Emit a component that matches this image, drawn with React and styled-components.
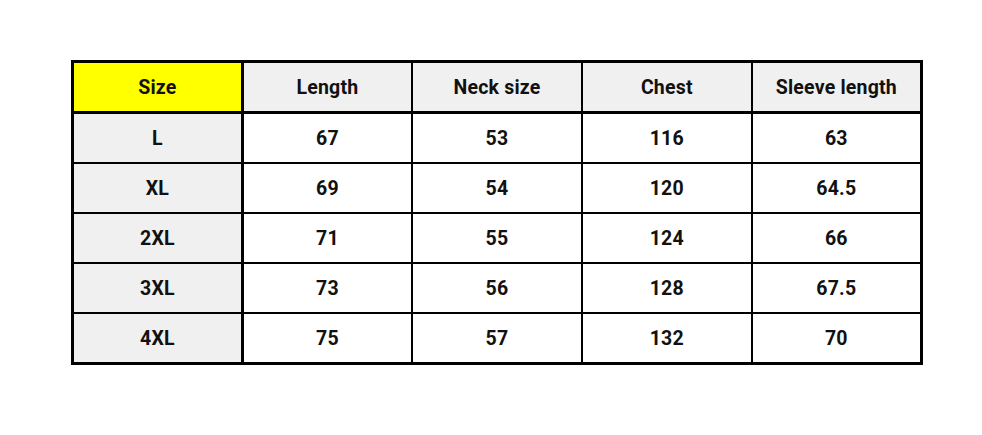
import React from 'react';
import styled, { createGlobalStyle } from 'styled-components';

const GlobalStyle = createGlobalStyle`
    body{
        margin: 0;
        background: #ffffff;
        font-family: Roboto, "Liberation Sans", sans-serif;
    }
`

const Page = styled.div`
    width: 982px;
    height: 435px;
    padding-top: 60px;
    padding-left: 71px;
    box-sizing: border-box;
`

const Table = styled.table`
    border-collapse: collapse;
    table-layout: fixed;
    width: 852px;
    border: 3px solid #000;
`

const Cell = styled.td`
    height: 48px;
    padding: 0;
    text-align: center;
    vertical-align: middle;
    font-size: 19.5px;
    letter-spacing: 0.2px;
    font-weight: 700;
    color: #111;
    border: 2px solid #000;
    background: ${(p) => (p.$yellow ? '#ffff00' : p.$grey ? '#f0f0f0' : '#ffffff')};
    border-right-width: ${(p) => (p.$first ? '3px' : '2px')};
    border-bottom-width: ${(p) => (p.$head ? '3px' : '2px')};
`

const headers = ['Size', 'Length', 'Neck size', 'Chest', 'Sleeve length'];
const rows = [
    ['L', '67', '53', '116', '63'],
    ['XL', '69', '54', '120', '64.5'],
    ['2XL', '71', '55', '124', '66'],
    ['3XL', '73', '56', '128', '67.5'],
    ['4XL', '75', '57', '132', '70'],
];

const App = () => {
    return (
        <Page>
            <GlobalStyle />
            <Table>
                <tbody>
                    <tr>
                        {headers.map((h, i) =>
                            <Cell key={h} $head $first={i === 0} $yellow={i === 0} $grey={i !== 0}>{h}</Cell>
                        )}
                    </tr>
                    {rows.map((r) =>
                        <tr key={r[0]}>
                            {r.map((v, i) =>
                                <Cell key={i} $first={i === 0} $grey={i === 0}>{v}</Cell>
                            )}
                        </tr>
                    )}
                </tbody>
            </Table>
        </Page>
    );
}

export default App;
